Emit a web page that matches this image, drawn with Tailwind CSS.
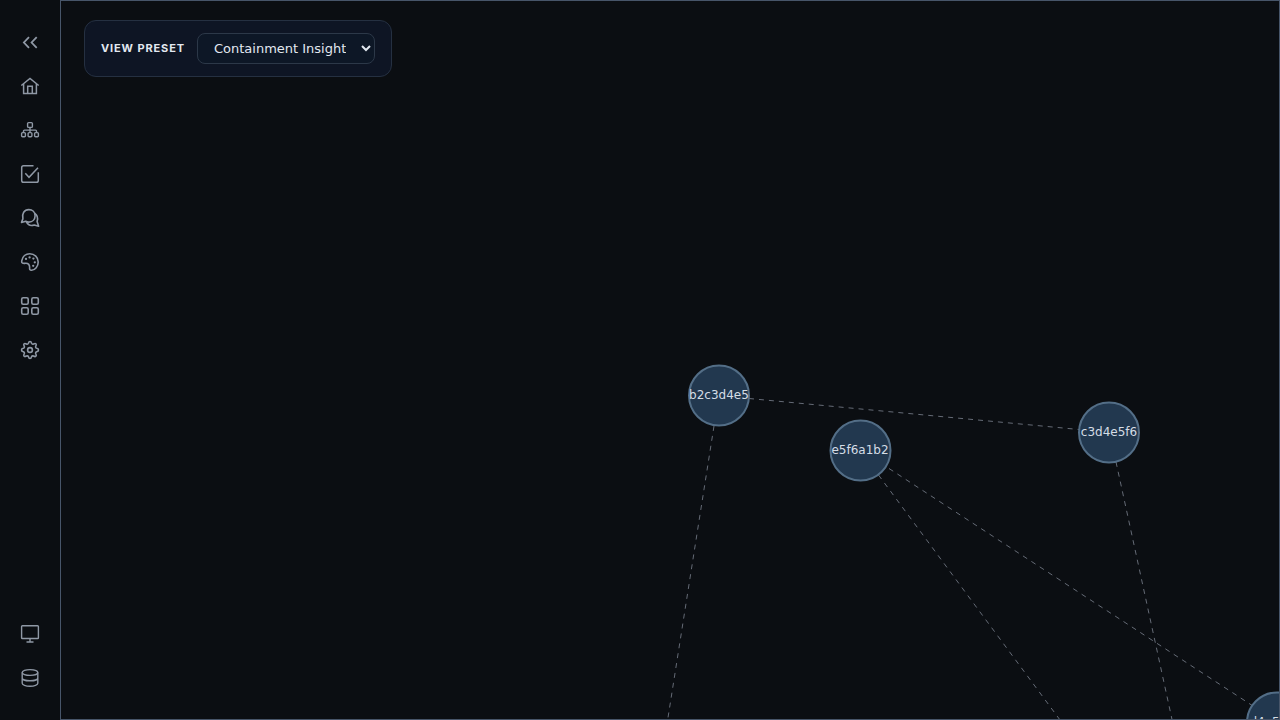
<!DOCTYPE html>
<html lang="en">
<head>
<meta charset="utf-8">
<meta name="viewport" content="width=device-width, initial-scale=1">
<title>Graph view</title>
<script src="https://cdn.jsdelivr.net/npm/@tailwindcss/browser@4"></script>
</head>
<body class="flex h-screen overflow-hidden bg-[#0b0e12] text-[#e2e8f0]">
<nav aria-label="Main" class="flex w-15 shrink-0 flex-col items-center gap-2 pt-6 pb-6 text-[#8f98a5]">
  <button aria-label="Collapse sidebar" class="grid size-9 place-items-center">
    <svg class="size-5" viewBox="0 0 20 20" fill="none" stroke="currentColor" stroke-width="1.8"><path d="M9 5.200 3.900 10.500 9 15.800M16.700 5.200l-5.100 5.300 5.100 5.300"/></svg>
  </button>
  <a href="#home" aria-label="Home" class="grid size-9 place-items-center">
    <svg class="size-5" viewBox="0 0 20 20" fill="none" stroke="currentColor" stroke-width="1.5"><path d="M1.300 9.500 10 2.400l8.700 7.100M3.600 8v9.500h12.800V8M7.700 17.300V10.200h4.600v7.100"/></svg>
  </a>
  <a href="#tree" aria-label="Hierarchy" class="grid size-9 place-items-center">
    <svg class="size-5" viewBox="0 0 20 20" fill="none" stroke="currentColor" stroke-width="1.4"><rect x="7.600" y="2.600" width="4.800" height="4.800" rx="1"/><rect x="1.600" y="12.600" width="3.800" height="4.200" rx="1"/><rect x="8.100" y="12.600" width="3.800" height="4.200" rx="1"/><rect x="14.600" y="12.600" width="3.800" height="4.200" rx="1"/><path d="M10 7.400v5.200M3.500 12.600v-1.500q0-1 1-1h11q1 0 1 1v1.500"/></svg>
  </a>
  <a href="#tasks" aria-label="Tasks" class="grid size-9 place-items-center">
    <svg class="size-5" viewBox="0 0 20 20" fill="none" stroke="currentColor" stroke-width="1.5"><path d="M13.500 1.700h-10Q1.700 1.700 1.700 3.500v13q0 1.800 1.800 1.800h13q1.800 0 1.800-1.800V8.300M5.300 9.300l3.700 4 9-9.600"/></svg>
  </a>
  <a href="#chat" aria-label="Chat" class="grid size-9 place-items-center">
    <svg class="size-5" viewBox="0 0 20 20" fill="none" stroke="currentColor" stroke-width="1.6" stroke-linejoin="round"><path d="M8.800 1.600c3.700 0 6.300 2.600 6.300 6.200s-2.600 6.300-6.300 6.300c-1.200 0-2.200-.3-3.100-.8l-4.200 1.100 1.400-3.500C1.600 5.500 4.300 1.600 8.800 1.600Z"/><path d="M14.500 5.200c2.600 1.600 3.600 4.900 2.600 8.300l1.500 4.800-4.300-1.300c-3 1-6.300.2-7.900-3.100"/></svg>
  </a>
  <a href="#theme" aria-label="Theme" class="grid size-9 place-items-center">
    <svg class="size-5" viewBox="0 0 20 20" fill="none" stroke="currentColor" stroke-width="1.6" stroke-linejoin="round"><path d="M1.800 8.600C2.500 4.700 5.700 1.700 9.800 1.700c4.700 0 8.400 3.600 8.400 8.200 0 4.600-3.100 8.300-6.700 8.400-1.700 0-2-1.100-1.900-2.600.2-2.900-1.300-4.600-4.100-4.400-1.900.1-3.200.4-3.700-.8-.2-.5-.1-1.200 0-1.900Z"/><g fill="currentColor" stroke="none"><circle cx="6" cy="6.900" r="1.150"/><circle cx="9.600" cy="5.400" r="1.150"/><circle cx="13.400" cy="6.600" r="1.150"/><circle cx="14.800" cy="10.300" r="1.150"/><circle cx="13.200" cy="13.800" r="1.150"/></g></svg>
  </a>
  <a href="#apps" aria-label="Apps" class="grid size-9 place-items-center">
    <svg class="size-5" viewBox="0 0 20 20" fill="none" stroke="currentColor" stroke-width="1.600"><rect x="1.700" y="1.700" width="6.500" height="6.500" rx="1.500"/><rect x="11.800" y="1.700" width="6.500" height="6.500" rx="1.500"/><rect x="1.700" y="11.800" width="6.500" height="6.500" rx="1.500"/><rect x="11.800" y="11.800" width="6.500" height="6.500" rx="1.500"/></svg>
  </a>
  <a href="#settings" aria-label="Settings" class="grid size-9 place-items-center">
    <svg class="size-5" viewBox="0 0 20 20" fill="none" stroke="currentColor" stroke-width="1.600" stroke-linejoin="round"><path d="M8.500 3.200Q8.800 1.500 10 1.500t1.500 1.700q.6 1.400 2.100.8 1.500-1 2.300-.2t-.1 2.300q-.7 1.600.9 2.200 1.800.3 1.800 1.700t-1.800 1.700q-1.600.7-.9 2.200 1 1.500.1 2.300t-2.300-.2q-1.500-.6-2.100.8-.3 1.700-1.500 1.700t-1.500-1.700q-.6-1.400-2.100-.8-1.500 1-2.300.2t.1-2.300q.7-1.500-.9-2.200-1.800-.3-1.800-1.700t1.800-1.700q1.600-.6.900-2.200-.9-1.500-.1-2.300T6.400 4q1.500.6 2.100-.8Z"/><circle cx="10" cy="10" r="2.400"/></svg>
  </a>
  <a href="#display" aria-label="Display" class="mt-auto grid size-9 place-items-center">
    <svg class="size-5" viewBox="0 0 20 20" fill="none" stroke="currentColor" stroke-width="1.400"><rect x="1.600" y="1.700" width="16.800" height="12.800" rx=".8"/><path d="M10 14.500v3.300M6.500 18h7"/></svg>
  </a>
  <a href="#data" aria-label="Database" class="grid size-9 place-items-center">
    <svg class="size-5" viewBox="0 0 20 20" fill="none" stroke="currentColor" stroke-width="1.400"><ellipse cx="10" cy="4.500" rx="7.800" ry="2.900"/><path d="M2.200 4.500v10.800c0 1.600 3.400 3 7.800 3s7.800-1.400 7.800-3V4.500M2.200 9.900c0 1.600 3.400 2.900 7.800 2.900s7.800-1.300 7.800-2.900"/></svg>
  </a>
</nav>
<main class="relative min-w-0 flex-1 overflow-hidden border border-[#475569]">
  <svg class="absolute inset-0 size-full" role="img" aria-label="Containment graph">
    <g transform="translate(-61 -1)">
      <g stroke="#656b76" stroke-width="1" stroke-dasharray="5 5" fill="none">
        <path d="M749 398.500 1079 429.500"/>
        <path d="M714 426 667 724"/>
        <path d="M878.500 475 1063 724"/>
        <path d="M889 468.500 1253 706"/>
        <path d="M1116 462 1173 724"/>
      </g>
      <g fill="#22384f" stroke="#536e87" stroke-width="2">
        <circle cx="719" cy="395.500" r="30"/>
        <circle cx="860.500" cy="450.500" r="30"/>
        <circle cx="1109" cy="432.500" r="30"/>
        <circle cx="1277" cy="722.500" r="30"/>
      </g>
      <g class="font-['DejaVu_Sans',sans-serif] text-[12px]" fill="#d5dde6" text-anchor="middle">
        <text x="719" y="399">b2c3d4e5</text>
        <text x="860" y="454">e5f6a1b2</text>
        <text x="1109" y="436">c3d4e5f6</text>
        <text x="1278" y="726">d4e5f6a1</text>
      </g>
    </g>
  </svg>
  <div class="absolute top-[19px] left-[23px] flex items-center gap-3 rounded-xl border border-[#253041] bg-[#0e1524] px-4 py-3">
    <label for="preset" class="font-[Inter,sans-serif] text-[11px] font-bold tracking-[0.08em] uppercase">View preset</label>
    <select id="preset" class="h-[31px] w-[178px] rounded-lg border border-[#2c3848] bg-[#0d1726] px-3 font-['DejaVu_Sans',sans-serif] text-[13px] text-[#e2e8f0]">
      <option>Containment Insight</option>
    </select>
  </div>
</main>
</body>
</html>
